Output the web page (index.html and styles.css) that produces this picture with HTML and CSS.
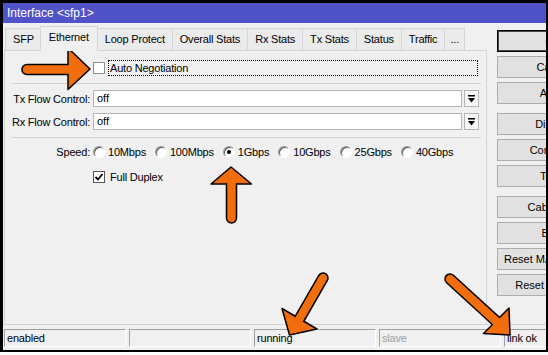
FILE: index.html
```html
<!DOCTYPE html>
<html lang="en">
<head>
  <meta charset="UTF-8"/>
  <title>Interface &lt;sfp1&gt;</title>
  <link rel="stylesheet" href="styles.css">
</head>
<body>
  <div class="frame">
    <div class="titlebar">Interface &lt;sfp1&gt;</div>

    <div class="body">
      <div class="main">
        <div class="tabs">
          <div class="tab">SFP</div>
          <div class="tab active">Ethernet</div>
          <div class="tab">Loop Protect</div>
          <div class="tab">Overall Stats</div>
          <div class="tab">Rx Stats</div>
          <div class="tab">Tx Stats</div>
          <div class="tab">Status</div>
          <div class="tab">Traffic</div>
          <div class="tab more">...</div>
        </div>

        <div class="panel">
          <div class="row auto">
            <span class="check"></span>
            <span class="focus">Auto Negotiation</span>
          </div>
          <div class="sep"></div>

          <div class="row field">
            <span class="label">Tx Flow Control:</span>
            <span class="input">off</span>
            <span class="drop"><svg width="7" height="8" viewBox="0 0 7 8"><rect x="0" y="0" width="7" height="1.5" fill="#000"/><polygon points="0,3 7,3 3.5,7.5" fill="#000"/></svg></span>
          </div>
          <div class="row field">
            <span class="label">Rx Flow Control:</span>
            <span class="input">off</span>
            <span class="drop"><svg width="7" height="8" viewBox="0 0 7 8"><rect x="0" y="0" width="7" height="1.5" fill="#000"/><polygon points="0,3 7,3 3.5,7.5" fill="#000"/></svg></span>
          </div>
          <div class="sep"></div>

          <div class="row speed">
            <span class="label">Speed:</span>
            <span class="opt"><span class="radio"></span>10Mbps</span>
            <span class="opt"><span class="radio"></span>100Mbps</span>
            <span class="opt"><span class="radio on"></span>1Gbps</span>
            <span class="opt"><span class="radio"></span>10Gbps</span>
            <span class="opt"><span class="radio"></span>25Gbps</span>
            <span class="opt"><span class="radio"></span>40Gbps</span>
          </div>

          <div class="row duplex">
            <span class="check on"><svg width="10" height="10" viewBox="0 0 10 10"><path d="M1.5 5 L4 7.5 L8.5 2" fill="none" stroke="#000" stroke-width="1.8"/></svg></span>
            <span class="text">Full Duplex</span>
          </div>
        </div>
      </div>

      <div class="side">
        <div class="btn default">OK</div>
        <div class="btn">Cancel</div>
        <div class="btn">Apply</div>
        <div class="btn group">Disable</div>
        <div class="btn">Comment</div>
        <div class="btn">Torch</div>
        <div class="btn group">Cable Test</div>
        <div class="btn">Blink</div>
        <div class="btn">Reset MAC Address</div>
        <div class="btn">Reset Counters</div>
      </div>
    </div>

    <div class="status">
      <div class="cell">enabled</div>
      <div class="cell"></div>
      <div class="cell">running</div>
      <div class="cell muted">slave</div>
      <div class="cell">link ok</div>
    </div>

    <!-- callout arrows drawn over the window -->
    <svg class="arrows" width="548" height="355" viewBox="0 0 548 355">
      <g>
        <line x1="27" y1="69.5" x2="68" y2="69.5" stroke="#000" stroke-width="11.5" stroke-linecap="round"/>
        <polygon points="68,48 90,69 68,89.5" fill="#f26d0c" stroke="#000" stroke-width="1.5" stroke-linejoin="round"/>
        <line x1="27" y1="69.5" x2="70" y2="69.5" stroke="#f26d0c" stroke-width="8.5" stroke-linecap="round"/>
      </g>
      <g>
        <line x1="231.5" y1="218" x2="231.5" y2="184" stroke="#000" stroke-width="11.5" stroke-linecap="round"/>
        <polygon points="211,184 231,167 251.5,184" fill="#f26d0c" stroke="#000" stroke-width="1.5" stroke-linejoin="round"/>
        <line x1="231.5" y1="218" x2="231.5" y2="182" stroke="#f26d0c" stroke-width="8.5" stroke-linecap="round"/>
      </g>
      <g>
        <line x1="323" y1="278" x2="299.5" y2="318.8" stroke="#000" stroke-width="11.5" stroke-linecap="round"/>
        <polygon points="282,308.5 289.5,335 317,329" fill="#f26d0c" stroke="#000" stroke-width="1.5" stroke-linejoin="round"/>
        <line x1="323" y1="278" x2="298.5" y2="320.5" stroke="#f26d0c" stroke-width="8.5" stroke-linecap="round"/>
      </g>
      <g>
        <line x1="450" y1="279" x2="496" y2="321" stroke="#000" stroke-width="11.5" stroke-linecap="round"/>
        <polygon points="509,308 510,335 483.5,333.5" fill="#f26d0c" stroke="#000" stroke-width="1.5" stroke-linejoin="round"/>
        <line x1="450" y1="279" x2="497.5" y2="322.5" stroke="#f26d0c" stroke-width="8.5" stroke-linecap="round"/>
      </g>
    </svg>
  </div>
</body>
</html>
```

FILE: styles.css
```css
html,body{margin:0;height:100%;background:#fff;}
body{font-family:'Liberation Sans',Arial,sans-serif;font-size:11px;color:#000;}

.frame{
  position:relative;width:548px;height:352px;box-sizing:border-box;
  border-style:solid;border-color:#000;border-width:3px 2px 2px 3px;
  background:#f0f0f0;overflow:hidden;
}
.titlebar{height:20px;line-height:20px;padding-left:4px;background:#5052c8;color:#fff;font-size:12px;}

.body{display:flex;height:301px;}
.main{width:483px;padding-left:1px;flex-shrink:0;display:flex;flex-direction:column;}

/* tab strip */
.tabs{display:flex;align-items:flex-end;height:24px;margin-top:3px;padding-left:1px;position:relative;z-index:1;}
.tab{
  height:21px;line-height:21px;padding:0 7px;margin-right:-1px;
  border:1px solid #d6d6d6;border-bottom:none;background:#ebebeb;letter-spacing:-0.2px;
}
.tab.active{height:24px;line-height:21px;margin-bottom:-1px;background:#f0f0f0;padding:0 8px;margin-left:-1px;}
.tab.more{padding:0 5px;}

.panel{flex:1;border:1px solid #d6d6d6;border-bottom:none;display:flex;flex-direction:column;}

.row{display:flex;align-items:center;}
.label{width:85px;padding-right:3px;text-align:right;letter-spacing:-0.2px;}

.check{
  width:12px;height:12px;box-sizing:border-box;border:1px solid #8f8f8f;background:#fff;
  display:flex;align-items:center;justify-content:center;
}
.check.on{border-color:#555;}

.auto{margin-top:9px;height:16px;padding-left:88px;}
.focus{
  margin-left:3px;width:370px;height:16px;box-sizing:border-box;line-height:14px;padding-left:1px;
  border:1px dotted #000;letter-spacing:-0.2px;
}

.sep{height:0;border-top:1px solid #d2d2d2;margin:7px 5px 6px 7px;}

.field{height:17px;}
.field + .field{margin-top:6px;}
.input{
  width:369px;height:17px;box-sizing:border-box;line-height:15px;padding-left:3px;
  border:1px solid #b4b4b4;background:#fff;
}
.drop{
  width:15px;height:17px;box-sizing:border-box;margin-left:2px;
  border:1px solid #b4b4b4;background:#f7f7f7;
  display:flex;align-items:center;justify-content:center;
}

.speed{margin-top:1px;height:14px;}
.opt{display:flex;align-items:center;margin-right:9px;letter-spacing:-0.2px;}
.radio{
  width:12px;height:12px;box-sizing:border-box;border-radius:50%;margin-right:3px;
  border:1px solid;border-color:#9a9a9a #fff #fff #9a9a9a;background:#fff;
  box-shadow:inset 1px 1px 0 #555;position:relative;
}
.radio.on::after{
  content:'';position:absolute;left:3px;top:3px;width:4px;height:4px;border-radius:50%;background:#000;
}

.duplex{margin-top:11px;height:14px;padding-left:88px;}
.duplex .text{margin-left:5px;letter-spacing:-0.2px;}

/* button column, runs past the right edge of the shot */
.side{margin-left:10px;padding-top:7px;display:flex;flex-direction:column;gap:4px;}
.btn{
  width:113px;height:22px;flex-shrink:0;box-sizing:border-box;line-height:20px;text-align:center;
  border:1px solid #adadad;background:#e1e1e1;
}
.btn.default{border-color:#000;box-shadow:inset 0 0 0 1px #4a4a4a;}
.btn.group{margin-top:5px;}

/* status bar */
.status{display:flex;gap:3px;padding:4px 0 0 1px;border-top:1px solid #d2d2d2;}
.cell{
  flex:0 0 122px;height:18px;box-sizing:border-box;line-height:16px;padding-left:2px;
  border:1px solid;border-color:#a0a0a0 #fff #fff #a0a0a0;letter-spacing:-0.2px;
}
.cell.muted{color:#a0a0a0;}

.arrows{position:absolute;left:-3px;top:-3px;pointer-events:none;}
```
